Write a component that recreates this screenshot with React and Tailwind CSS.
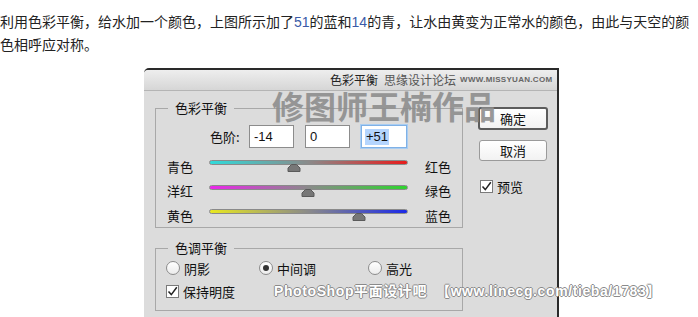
import React from "react";

const sans = "font-['Noto_Sans_CJK_SC','Noto_Sans',sans-serif]";

function Slider({ left, right, from, to, pos }) {
  return (
    <div className="flex items-center h-[24.5px]">
      <div className="w-[42px] text-[13px] leading-none text-[#111] pl-[0px]">{left}</div>
      <div className="relative w-[199px] h-[12px]">
        <div
          className="h-[5px] rounded-full border border-[#8a8a8a]"
          style={{ background: `linear-gradient(to right, ${from}, #8a8a8a 50%, ${to})` }}
        />
        <div className="absolute top-[4px]" style={{ left: pos - 7 }}>
          <svg width="14" height="8" viewBox="0 0 14 8">
            <path d="M4.5 0.5 L9.5 0.5 L13 4 L13 7.5 L1 7.5 L1 4 Z" fill="#777" stroke="#5a5a5a" strokeWidth="1" />
          </svg>
        </div>
      </div>
      <div className="ml-[17px] text-[13px] leading-none text-[#111]">{right}</div>
    </div>
  );
}

function Radio({ checked, label, w }) {
  return (
    <div className="flex items-center" style={{ width: w }}>
      <div className="w-[14px] h-[14px] rounded-full border border-[#8c8c8c] bg-gradient-to-b from-white to-[#ececec] flex items-center justify-center">
        {checked && <div className="w-[6px] h-[6px] rounded-full bg-[#333]" />}
      </div>
      <span className="ml-[4px] text-[13px] leading-none text-[#111]">{label}</span>
    </div>
  );
}

function Check({ label }) {
  return (
    <div className="flex items-center">
      <div className="w-[13px] h-[13px] border border-[#7a7a7a] bg-white flex items-center justify-center">
        <svg width="11" height="11" viewBox="0 0 11 11">
          <path d="M1.5 5.5 L4.3 8.6 L9.8 1.2" fill="none" stroke="#222" strokeWidth="1.5" />
        </svg>
      </div>
      <span className="ml-[4px] text-[13px] leading-none text-[#111]">{label}</span>
    </div>
  );
}

export default function App() {
  return (
    <div className={`relative w-[698px] h-[317px] overflow-hidden bg-white ${sans}`}>
      <p className="pt-[10px] text-[14px] leading-[22px] text-[#222]">
        利用色彩平衡，给水加一个颜色，上图所示加了<span className="text-[#3a5aa8] font-['Liberation_Sans',sans-serif]">51</span>的蓝和<span className="text-[#3a5aa8] font-['Liberation_Sans',sans-serif]">14</span>的青，让水由黄变为正常水的颜色，由此与天空的颜色相呼应对称。
      </p>

      <div className="relative ml-[144px] mt-[13px] w-[415px] border-t-2 border-r-2 border-[#2a2a2a] rounded-tl-[5px] bg-[#dcdcdc]">
        {/* title bar */}
        <div className="h-[21px] flex items-center pl-[186px] bg-gradient-to-b from-[#eeeeee] to-[#d6d6d6] border-b border-[#b4b4b4] rounded-tl-[4px]">
          <span className="text-[12px] leading-none text-[#222]">色彩平衡</span>
          <span className="ml-[6px] text-[12px] leading-none text-[#555]">思缘设计论坛</span>
          <span className="ml-[4px] text-[8px] leading-none font-bold text-[#666] tracking-[0.3px] font-['Liberation_Sans',sans-serif]">WWW.MISSYUAN.COM</span>
        </div>

        {/* body */}
        <div className="flex pl-[11px] pb-[12px]">
          <div className="w-[308px]">
            <fieldset className="mt-[10px] border border-[#a8a8a8] h-[127px]">
              <legend className="ml-[12px] px-[7px] text-[13px] leading-[14px] text-[#111]">色彩平衡</legend>
              <div className="flex items-center mt-[10px] pl-[54px]">
                <span className="w-[39px] text-[13px] leading-none text-[#111]">色阶:</span>
                <div className="w-[45px] h-[23px] bg-white border border-[#8c8c8c] flex items-center pl-[4px] text-[13px] font-['Liberation_Sans',sans-serif] text-[#111]">-14</div>
                <div className="ml-[11px] w-[45px] h-[23px] bg-white border border-[#8c8c8c] flex items-center pl-[4px] text-[13px] font-['Liberation_Sans',sans-serif] text-[#111]">0</div>
                <div className="ml-[11px] w-[46px] h-[23px] bg-white border border-[#7fb1e6] shadow-[0_0_0_1px_#a9cdf2] flex items-center pl-[3px] text-[13px] font-['Liberation_Sans',sans-serif] text-[#111]">
                  <span className="bg-[#b4d5fe] px-[1px] leading-[16px]">+51</span>
                </div>
              </div>
              <div className="mt-[6px] pl-[11px]">
                <Slider left="青色" right="红色" from="#30dada" to="#e81c1c" pos={85} />
                <Slider left="洋红" right="绿色" from="#ea26ea" to="#2ed42e" pos={99} />
                <Slider left="黄色" right="蓝色" from="#e8e820" to="#1c2ae8" pos={150} />
              </div>
            </fieldset>

            <fieldset className="mt-[13px] border border-[#a8a8a8] h-[70px]">
              <legend className="ml-[12px] px-[7px] text-[13px] leading-[14px] text-[#111]">色调平衡</legend>
              <div className="flex items-center h-[20px] mt-[3px] pl-[10px]">
                <Radio label="阴影" w={93} />
                <Radio label="中间调" checked w={109} />
                <Radio label="高光" />
              </div>
              <div className="flex items-center h-[20px] mt-[3px] pl-[10px]">
                <Check label="保持明度" />
              </div>
            </fieldset>
          </div>

          <div className="ml-[15px] pt-[16px] flex flex-col">
            <button className="w-[70px] h-[23px] border-2 border-[#5c5c5c] rounded-[3px] bg-gradient-to-b from-white to-[#f2f2f2] text-[13px] leading-none text-[#111]">确定</button>
            <button className="ml-[1px] mt-[10px] w-[68px] h-[21px] border border-[#9a9a9a] rounded-[3px] bg-gradient-to-b from-white to-[#f2f2f2] text-[13px] leading-none text-[#111]">取消</button>
            <div className="ml-[2px] mt-[19px]">
              <Check label="预览" />
            </div>
          </div>
        </div>

        {/* watermark */}
        <div className="absolute left-[128px] top-[19px] text-[32px] leading-none font-bold text-[#8e8e8e] opacity-90 pointer-events-none font-['Noto_Sans_CJK_SC',serif]">
          修图师王楠作品
        </div>
      </div>

      <div className="absolute left-[274px] top-[284px] text-[14px] leading-[14px] font-bold text-white tracking-[0.6px] font-['Liberation_Sans','Noto_Sans_CJK_SC',sans-serif] [text-shadow:1px_0_0_#8a8a8a,-1px_0_0_#8a8a8a,0_1px_0_#8a8a8a,0_-1px_0_#8a8a8a] whitespace-nowrap">
        PhotoShop平面设计吧&nbsp;&nbsp;【www.linecg.com/tieba/1783】
      </div>
    </div>
  );
}
